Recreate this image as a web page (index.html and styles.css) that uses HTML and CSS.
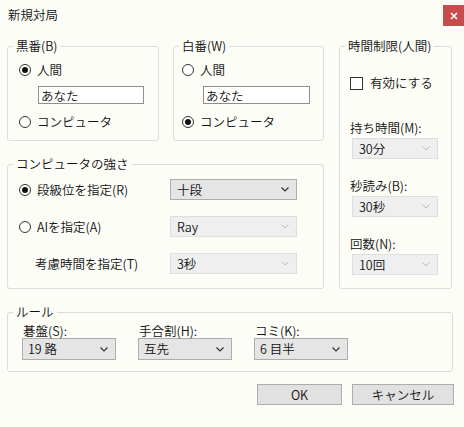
FILE: index.html
```html
<!DOCTYPE html>
<html lang="ja">
<head>
  <meta charset="UTF-8">
  <title>新規対局</title>
  <link rel="stylesheet" href="styles.css">
</head>
<body>
  <div class="dialog">
    <div class="titlebar">
      <span class="title">新規対局</span>
      <button class="close">
        <svg width="8" height="8" viewBox="0 0 8 8"><path d="M1 1L7 7M7 1L1 7" stroke="#fff" stroke-width="1.6"/></svg>
      </button>
    </div>

    <div class="top">
      <div class="left">
        <div class="players">
          <fieldset class="group player black">
            <legend>黒番(B)</legend>
            <label class="radio"><span class="dot checked"></span>人間</label>
            <input class="name" type="text" value="あなた">
            <label class="radio second"><span class="dot"></span>コンピュータ</label>
          </fieldset>
          <fieldset class="group player white">
            <legend>白番(W)</legend>
            <label class="radio"><span class="dot"></span>人間</label>
            <input class="name" type="text" value="あなた">
            <label class="radio second"><span class="dot checked"></span>コンピュータ</label>
          </fieldset>
        </div>

        <fieldset class="group strength">
          <legend>コンピュータの強さ</legend>
          <div class="row">
            <label class="radio"><span class="dot checked"></span>段級位を指定(R)</label>
            <div class="combo"><span>十段</span><svg width="8" height="5" viewBox="0 0 8 5"><path d="M0.5 0.5L4 4L7.5 0.5" fill="none" stroke="#333" stroke-width="1.2"/></svg></div>
          </div>
          <div class="row">
            <label class="radio"><span class="dot"></span>AIを指定(A)</label>
            <div class="combo off"><span>Ray</span><svg width="8" height="5" viewBox="0 0 8 5"><path d="M0.5 0.5L4 4L7.5 0.5" fill="none" stroke="#bbb" stroke-width="1"/></svg></div>
          </div>
          <div class="row">
            <label class="radio indent">考慮時間を指定(T)</label>
            <div class="combo off"><span>3秒</span><svg width="8" height="5" viewBox="0 0 8 5"><path d="M0.5 0.5L4 4L7.5 0.5" fill="none" stroke="#bbb" stroke-width="1"/></svg></div>
          </div>
        </fieldset>
      </div>

      <fieldset class="group time">
        <legend>時間制限(人間)</legend>
        <label class="check"><span class="box"></span>有効にする</label>
        <div class="field first">
          <div class="label">持ち時間(M):</div>
          <div class="combo off"><span>30分</span><svg width="8" height="5" viewBox="0 0 8 5"><path d="M0.5 0.5L4 4L7.5 0.5" fill="none" stroke="#bbb" stroke-width="1"/></svg></div>
        </div>
        <div class="field">
          <div class="label">秒読み(B):</div>
          <div class="combo off"><span>30秒</span><svg width="8" height="5" viewBox="0 0 8 5"><path d="M0.5 0.5L4 4L7.5 0.5" fill="none" stroke="#bbb" stroke-width="1"/></svg></div>
        </div>
        <div class="field">
          <div class="label">回数(N):</div>
          <div class="combo off"><span>10回</span><svg width="8" height="5" viewBox="0 0 8 5"><path d="M0.5 0.5L4 4L7.5 0.5" fill="none" stroke="#bbb" stroke-width="1"/></svg></div>
        </div>
      </fieldset>
    </div>

    <fieldset class="group rule">
      <legend>ルール</legend>
      <div class="cols">
        <div class="col">
          <div class="label">碁盤(S):</div>
          <div class="combo"><span>19 路</span><svg width="8" height="5" viewBox="0 0 8 5"><path d="M0.5 0.5L4 4L7.5 0.5" fill="none" stroke="#333" stroke-width="1.2"/></svg></div>
        </div>
        <div class="col">
          <div class="label">手合割(H):</div>
          <div class="combo"><span>互先</span><svg width="8" height="5" viewBox="0 0 8 5"><path d="M0.5 0.5L4 4L7.5 0.5" fill="none" stroke="#333" stroke-width="1.2"/></svg></div>
        </div>
        <div class="col">
          <div class="label">コミ(K):</div>
          <div class="combo"><span>6 目半</span><svg width="8" height="5" viewBox="0 0 8 5"><path d="M0.5 0.5L4 4L7.5 0.5" fill="none" stroke="#333" stroke-width="1.2"/></svg></div>
        </div>
      </div>
    </fieldset>

    <div class="actions">
      <button class="btn ok">OK</button>
      <button class="btn cancel">キャンセル</button>
    </div>
  </div>
</body>
</html>
```

FILE: styles.css
```css
body {
  margin: 0;
  background-color: #fdfdf8;
  color: #111;
  font-family: "Noto Sans CJK JP", "Noto Sans", sans-serif;
  font-size: 12.5px;
  font-weight: 350;
  line-height: 16px;
}
.dialog {
  width: 464px;
  height: 427px;
  overflow: hidden;
}
.titlebar {
  display: flex;
  align-items: flex-start;
  height: 38px;
}
.title {
  padding: 7px 0 0 8px;
}
.close {
  margin: 5px 0 0 auto;
  width: 21px;
  height: 21px;
  padding: 0;
  border: none;
  background-color: #c94c4c;
  display: flex;
  align-items: center;
  justify-content: center;
}
/* fieldset padding-left also pushes the legend, so the legend margin undoes it */
.group {
  margin: 0;
  padding: 0;
  border: 1px solid #dcdcdc;
  border-radius: 3px;
  box-sizing: border-box;
  min-width: 0;
}
.group legend {
  margin-left: 5px;
  padding: 0 3px;
  line-height: 16px;
}
.top {
  display: flex;
  gap: 15px;
  padding-left: 7px;
}
.left {
  width: 317px;
}
.players {
  display: flex;
  gap: 14px;
}
.player {
  height: 103px;
  padding: 8px 0 0 11px;
}
.player legend {
  margin-left: -6px;
}
.black {
  width: 152px;
}
.white {
  width: 151px;
  padding-left: 8px;
}
.white legend {
  margin-left: -3px;
}
.radio {
  display: flex;
  align-items: center;
  height: 16px;
}
.radio.second {
  margin-top: 10px;
}
.dot {
  width: 12px;
  height: 12px;
  border: 1px solid #333;
  border-radius: 50%;
  box-sizing: border-box;
  margin-right: 6px;
  display: flex;
  align-items: center;
  justify-content: center;
  background-color: #fff;
}
.dot.checked::after {
  content: "";
  width: 6px;
  height: 6px;
  border-radius: 50%;
  background-color: #111;
}
.name {
  display: block;
  margin: 8px 0 0 19px;
  width: 106px;
  height: 18px;
  box-sizing: border-box;
  padding: 0 2px;
  border: 1px solid #8f8f8f;
  font: inherit;
  color: #111;
  background-color: #fff;
}
.white .name {
  margin-left: 21px;
  width: 107px;
}
.strength {
  margin-top: 15px;
  height: 133px;
  padding: 7px 0 0 11px;
}
.strength legend {
  margin-left: -6px;
}
.row {
  display: flex;
  align-items: center;
  height: 21px;
}
.row + .row {
  margin-top: 16px;
}
.row .radio {
  width: 151px;
}
.radio.indent {
  padding-left: 16px;
  box-sizing: border-box;
}
.combo {
  display: flex;
  align-items: center;
  justify-content: space-between;
  box-sizing: border-box;
  height: 21px;
  padding: 0 7px 0 6px;
  border: 1px solid #adadad;
  background-color: #e5e5e5;
}
.combo.off {
  border-color: #dedede;
  background-color: #efefef;
}
.row .combo {
  width: 127px;
}
.time {
  width: 113px;
  height: 251px;
  padding: 21px 0 0 10px;
}
.time legend {
  margin-left: -5px;
}
.check {
  display: flex;
  align-items: center;
  height: 16px;
}
.box {
  width: 13px;
  height: 13px;
  border: 1px solid #333;
  box-sizing: border-box;
  background-color: #fff;
  margin-right: 7px;
}
.field {
  margin-top: 19px;
}
.field.first {
  margin-top: 29px;
}
.field .combo {
  margin: 2px 0 0 2px;
  width: 86px;
}
.rule {
  margin: 15px 0 0 7px;
  width: 446px;
  height: 68px;
  padding: 4px 0 0 14px;
}
.rule legend {
  margin-left: -9px;
}
.cols {
  display: flex;
  gap: 22px;
}
.col {
  width: 94px;
}
.col .label {
  padding-left: 1px;
  line-height: 14px;
}
.col .combo {
  height: 22px;
  padding-left: 5px;
}
.actions {
  display: flex;
  justify-content: flex-end;
  gap: 10px;
  margin-top: 12px;
  padding-right: 10px;
}
.btn {
  height: 21px;
  padding: 0;
  border: 1px solid #adadad;
  background-color: #e1e1e1;
  font: inherit;
  color: #111;
}
.ok {
  width: 85px;
}
.cancel {
  width: 102px;
}
```
